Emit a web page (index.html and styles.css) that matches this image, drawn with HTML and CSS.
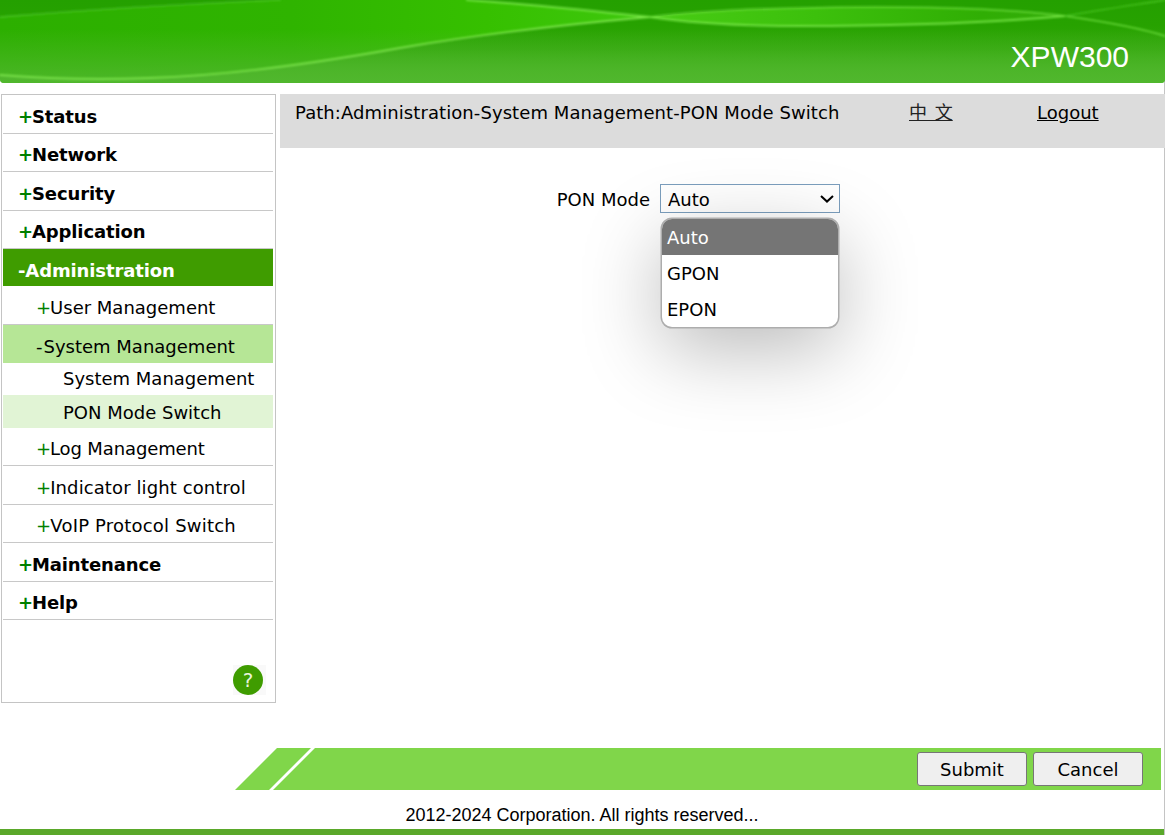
FILE: index.html
```html
<!DOCTYPE html>
<html lang="en">
<head>
<meta charset="utf-8">
<title>XPW300</title>
<link rel="stylesheet" href="styles.css">
</head>
<body>
<div class="page">
  <header class="banner">
    <svg class="banner-art" viewBox="0 0 1165 83" preserveAspectRatio="none" aria-hidden="true">
      <defs>
        <linearGradient id="baseG" x1="0" y1="0" x2="0" y2="1">
          <stop offset="0" stop-color="#24a000"/>
          <stop offset=".3" stop-color="#27a200"/>
          <stop offset=".6" stop-color="#32a70b"/>
          <stop offset="1" stop-color="#50b72d"/>
        </linearGradient>
        <linearGradient id="bandG" gradientUnits="userSpaceOnUse" x1="0" y1="0" x2="650" y2="0">
          <stop offset="0" stop-color="#2caf00"/>
          <stop offset=".45" stop-color="#2fb400"/>
          <stop offset=".75" stop-color="#36c000"/>
          <stop offset="1" stop-color="#3fc80e"/>
        </linearGradient>
        <linearGradient id="lensG" gradientUnits="userSpaceOnUse" x1="650" y1="0" x2="1065" y2="0">
          <stop offset="0" stop-color="#48cc14"/>
          <stop offset=".4" stop-color="#3cc00c"/>
          <stop offset=".8" stop-color="#30ae04"/>
          <stop offset="1" stop-color="#34ac0a"/>
        </linearGradient>
        <linearGradient id="veilG" x1="0" y1="0" x2="0" y2="1">
          <stop offset="0" stop-color="#50b72d" stop-opacity="0"/>
          <stop offset=".35" stop-color="#50b72d" stop-opacity="0"/>
          <stop offset="1" stop-color="#50b72d" stop-opacity=".9"/>
        </linearGradient>
        <filter id="soft" x="-5%" y="-50%" width="110%" height="200%"><feGaussianBlur stdDeviation="0.8"/></filter>
      </defs>
      <rect width="1165" height="83" fill="url(#baseG)"/>
      <path d="M0 17C60 12 180 4 280 0H467C530 4 590 11 650 17C570 24 470 36 400 48C300 66 220 76 150 78C100 80 50 79 0 75Z" fill="url(#bandG)"/>
      <rect width="1165" height="83" fill="url(#veilG)"/>
      <path d="M650 17C690 12 745 9 800 8C870 6 990 6 1065 16C1000 22 900 26 800 26C745 26 690 23 650 17Z" fill="url(#lensG)"/>
      <g fill="none" stroke-linecap="round" filter="url(#soft)">
        <path d="M0 75C50 79 100 80 150 78C220 76 300 66 400 48C470 36 570 24 650 17" stroke="#78e048" stroke-width="1.8"/>
        <path d="M650 17C690 12 745 9 800 8C870 6 990 6 1065 16C1100 21 1140 28 1165 36" stroke="#66d838" stroke-width="1.6"/>
        <path d="M467 0C530 4 590 11 650 17C690 23 745 26 800 26C900 26 1000 22 1065 16" stroke="#70e040" stroke-width="2"/>
        <path d="M1065 16C1100 10 1140 4 1165 0" stroke="#48c420" stroke-width="1.4"/>
        <path d="M0 17C60 12 180 4 280 0" stroke="#4cc428" stroke-width="1.4"/>
      </g>
    </svg>
    <div class="model">XPW300</div>
  </header>

  <main class="workspace">
    <nav class="sidebar">
      <a class="menu-row top"><span class="sign">+</span>Status</a>
      <a class="menu-row top"><span class="sign">+</span>Network</a>
      <a class="menu-row top"><span class="sign">+</span>Security</a>
      <a class="menu-row top"><span class="sign">+</span>Application</a>
      <a class="menu-row top active"><span class="sign">-</span>Administration</a>
      <a class="menu-row sub"><span class="sign">+</span>User Management</a>
      <a class="menu-row sub open"><span class="sign">-</span>System Management</a>
      <a class="leaf">System Management</a>
      <a class="leaf current">PON Mode Switch</a>
      <a class="menu-row sub narrow"><span class="sign">+</span>Log Management</a>
      <a class="menu-row sub wide"><span class="sign">+</span>Indicator light control</a>
      <a class="menu-row sub wider"><span class="sign">+</span>VoIP Protocol Switch</a>
      <a class="menu-row top"><span class="sign">+</span>Maintenance</a>
      <a class="menu-row top"><span class="sign">+</span>Help</a>
      <div class="help-wrap"><span class="help-box"><span class="help">?</span></span></div>
    </nav>

    <section class="content">
      <div class="pathbar">
        <span class="path">Path:Administration-System Management-PON Mode Switch</span>
        <a class="link lang">中 文</a>
        <a class="link">Logout</a>
      </div>
      <form class="form-row">
        <label class="form-label" for="mode">PON Mode</label>
        <div class="select-wrap">
          <select class="form-select" id="mode">
            <option>Auto</option>
            <option>GPON</option>
            <option>EPON</option>
          </select>
          <svg class="chevron" viewBox="0 0 14 8" aria-hidden="true"><path d="M1 1l6 5.6L13 1" fill="none" stroke="#000" stroke-width="2"/></svg>
        </div>
        <ul class="popup">
          <li class="popup-item selected">Auto</li>
          <li class="popup-item">GPON</li>
          <li class="popup-item">EPON</li>
        </ul>
      </form>
    </section>
  </main>

  <div class="toolbar">
    <svg class="slant" viewBox="0 0 80 42" aria-hidden="true">
      <polygon points="0,42 42,0 76,0 34,42" fill="#80d64a"/>
      <polygon points="38,42 80,0 80,42" fill="#80d64a"/>
    </svg>
    <div class="actions">
      <button class="btn" type="button">Submit</button>
      <button class="btn" type="button">Cancel</button>
    </div>
  </div>

  <footer class="copyright">2012-2024 Corporation. All rights reserved...</footer>
  <div class="bottom-strip"></div>
</div>
</body>
</html>
```
FILE: styles.css
```css
* { box-sizing: border-box; }
html, body { margin: 0; padding: 0; background: #fff; }
body {
  font-family: "DejaVu Sans", Verdana, sans-serif;
  font-size: 18px;
  color: #000;
  overflow: hidden;
}
.page { width: 1165px; height: 835px; display: flex; flex-direction: column; border-right: 1px solid #c4c4c4; }

.banner { position: relative; height: 83px; margin-right: -1px; flex: none; border-radius: 0 0 4px 4px; overflow: hidden; }
.banner-art { display: block; width: 100%; height: 100%; }
.model {
  position: absolute; right: 36px; top: 39px;
  font: 30px/36px "Liberation Sans", Arial, sans-serif;
  color: #fff;
}

.workspace { flex: none; height: 654px; margin-top: 11px; display: flex; align-items: flex-start; gap: 4px; padding-left: 1px; }

.sidebar {
  width: 275px; height: 609px; flex: none;
  border: 1px solid #c4c4c4;
  padding: 0 2px 0 1px;
  display: flex; flex-direction: column;
}
.menu-row {
  display: flex; align-items: center;
  height: 38.5px; flex: none;
  padding-top: 5px;
  border-bottom: 1px solid #c8c8c8;
  color: #000;
}
.top { padding-left: 15px; font-weight: 700; letter-spacing: -.12px; }
.sub { padding-left: 33px; }
.narrow { letter-spacing: -.12px; }
.wide { letter-spacing: .1px; }
.wider { letter-spacing: .2px; }
.sign { color: #008000; margin-right: -1px; }
.active { background: #3f9c00; color: #fff; border-bottom: 0; height: 37px; padding-top: 6px; }
.active .sign { color: #fff; margin-right: 0; }
.open { background: #b6e696; border-bottom: 0; height: 38px; padding-top: 6px; }
.open .sign { color: #000; margin-right: 1px; }
.leaf { display: flex; align-items: center; height: 32px; padding-left: 60px; padding-bottom: 1px; flex: none; }
.current { background: #e1f4d5; height: 33px; padding-top: 3px; padding-bottom: 0; }
.help-wrap { margin-top: auto; padding: 0 7px 7px 0; display: flex; justify-content: flex-end; }
.help-box { width: 33px; height: 30px; background: #f9f9f9; }
.help {
  width: 30px; height: 30px; border-radius: 50%;
  background: #3f9c00; color: #e8f4dd;
  display: flex; align-items: center; justify-content: center;
  font-size: 20px; line-height: 1;
}

.content { flex: 1; min-width: 0; }
.pathbar {
  height: 54px; background: #dcdcdc; padding-left: 15px;
  display: grid; grid-template-columns: 614px 128px 1fr;
  line-height: 37px; align-items: start; margin-right: -1px;
}
.path { letter-spacing: .08px; }
.link { color: #000; text-decoration: underline; justify-self: start; }
.lang { font-family: "DejaVu Sans", "Noto Sans CJK SC", sans-serif; color: #222; word-spacing: 2px; }

.form-row { position: relative; display: flex; align-items: center; gap: 10px; margin-top: 36px; height: 29px; }
.form-label { width: 370px; text-align: right; padding-top: 1px; }
.select-wrap { position: relative; width: 180px; height: 29px; }
.form-select {
  display: block; width: 180px; height: 29px;
  appearance: none; -webkit-appearance: none;
  font: 18px "DejaVu Sans", Verdana, sans-serif;
  padding: 2px 0 0 7px;
  background: #fff; border: 1px solid #7b9ebd; border-radius: 0; color: #000;
}
.chevron { position: absolute; left: 160px; top: 11px; width: 14px; height: 8px; }
.popup {
  position: absolute; left: 382px; top: 35px;
  width: 176px; height: 108px;
  margin: 0; padding: 0; list-style: none;
  background: #fff; border-radius: 10px;
  overflow: hidden;
  box-shadow: 0 0 0 1.5px #adadad, 0 22px 80px rgba(0, 0, 0, .28);
}
.popup-item { height: 36px; line-height: 37px; padding-left: 5px; }
.selected { background: #757575; color: #fff; }

.toolbar { flex: none; display: flex; height: 42px; margin-left: 235px; margin-right: 3px; }
.slant { width: 80px; height: 42px; display: block; flex: none; }
.actions { flex: 1; background: #80d64a; display: flex; justify-content: flex-end; align-items: center; gap: 6px; padding-right: 18px; }
.btn {
  width: 110px; height: 34px; padding: 0;
  font: 18px "DejaVu Sans", Verdana, sans-serif;
  background: #efefef; border: 1px solid #767676; border-radius: 3px; color: #000;
}

.copyright {
  flex: none; height: 39px; text-align: center;
  font: 18px/50px "Liberation Sans", Arial, sans-serif;
}
.bottom-strip { flex: 1; background: #5aa82a; }
```
